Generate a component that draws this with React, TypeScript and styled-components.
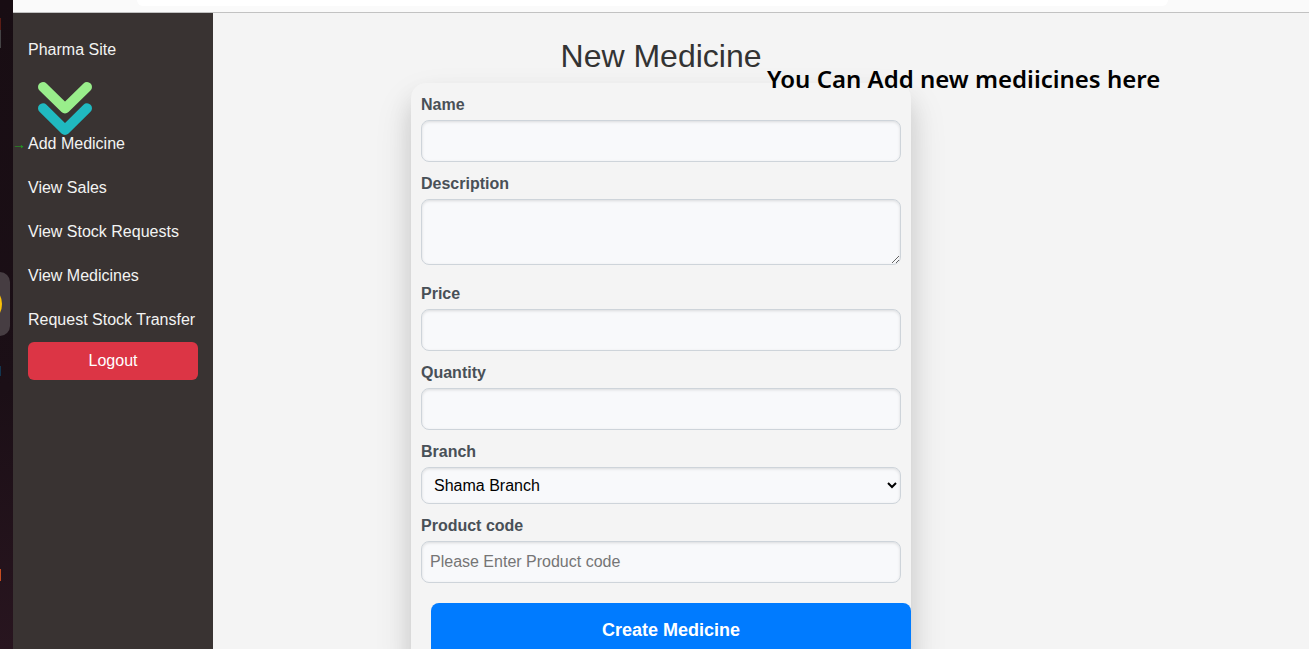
import React from "react";
import styled, { createGlobalStyle } from "styled-components";

const GlobalStyle = createGlobalStyle`
  *, *::before, *::after { box-sizing: border-box; }
  body {
    margin: 0;
    background: #f4f4f4;
    font-family: "Liberation Sans", Arial, sans-serif;
    font-size: 16px;
    line-height: 24px;
  }
`;

const Screen = styled.div`
  display: flex;
  height: 100vh;
  overflow: hidden;
`;

const Dock = styled.aside`
  position: relative;
  flex: 0 0 13px;
  overflow: hidden;
  background: linear-gradient(#180d13, #1b0f16 60%, #28151f);
`;

const DockMark = styled.span<{ $top: number; $width: number; $height: number; $fill: string; $round?: number }>`
  position: absolute;
  left: 0;
  top: ${(p) => p.$top}px;
  width: ${(p) => p.$width}px;
  height: ${(p) => p.$height}px;
  background: ${(p) => p.$fill};
  border-radius: 0 ${(p) => p.$round ?? 0}px ${(p) => p.$round ?? 0}px 0;
`;

const DockApp = styled.svg`
  position: absolute;
  left: 0;
  top: 290px;
`;

const Browser = styled.div`
  display: flex;
  flex: 1;
  flex-direction: column;
  min-width: 0;
`;

const Toolbar = styled.header`
  flex: 0 0 13px;
  padding: 0 141px 0 124px;
  background: #fafafa;
  border-bottom: 1px solid #c2c2c2;
`;

const AddressBar = styled.div`
  height: 6px;
  background: #fff;
  border-radius: 0 0 16px 16px;
`;

const Page = styled.div`
  display: flex;
  flex: 1;
  min-height: 0;
`;

const Sidebar = styled.nav`
  display: flex;
  flex: 0 0 200px;
  flex-direction: column;
  padding: 15px;
  background: #393332;
`;

const NavLink = styled.a`
  position: relative;
  padding: 10px 0;
  color: #f3f3f3;
  text-decoration: none;
  white-space: nowrap;
`;

const Arrow = styled.span`
  position: absolute;
  left: -16px;
  top: 10px;
  color: #1fa51f;
  font-size: 14px;
`;

const Logo = styled.svg`
  flex: none;
  margin: 10px 0 -14px 10px;
`;

const LogoutButton = styled.button`
  height: 38px;
  padding: 0;
  border: 0;
  border-radius: 6px;
  background: #dc3545;
  color: #fff;
  font: inherit;
`;

const Main = styled.main`
  position: relative;
  display: flex;
  flex: 1;
  flex-direction: column;
  align-items: center;
  min-width: 0;
  padding: 24px 200px 0 0;
  overflow: hidden;
`;

const Title = styled.h1`
  margin: 0 0 8px;
  color: #333;
  font-size: 32px;
  font-weight: 400;
  line-height: 38px;
`;

const Note = styled.p`
  position: absolute;
  left: 554px;
  top: 50px;
  margin: 0;
  color: #000;
  font-family: "Noto Sans", sans-serif;
  font-size: 24px;
  font-weight: 600;
  line-height: 32px;
  white-space: nowrap;
`;

const Form = styled.form`
  display: flex;
  flex: none;
  flex-direction: column;
  gap: 10px;
  width: 100%;
  max-width: 500px;
  padding: 10px;
  border-radius: 15px;
  background: #f4f4f4;
  box-shadow: 0 19px 38px rgba(0, 0, 0, 0.12), 0 15px 24px rgba(0, 0, 0, 0.1);
`;

const Field = styled.div`
  display: flex;
  flex-direction: column;
  gap: 3px;
`;

const Label = styled.label`
  color: #495057;
  font-weight: 700;
`;

const control = `
  width: 100%;
  border: 1px solid #ced4da;
  border-radius: 8px;
  background: #f8f9fb;
  box-shadow: inset 0 1px 3px rgba(0, 0, 0, 0.12);
  font-family: inherit;
  font-size: 16px;
`;

const Input = styled.input`
  ${control}
  height: 42px;
  padding: 8px;
  &::placeholder { color: #757575; }
`;

const TextArea = styled.textarea`
  ${control}
  display: block;
  height: 66px;
  margin-bottom: 7px;
  padding: 8px;
  resize: vertical;
`;

const Select = styled.select`
  ${control}
  height: 37px;
  padding: 8px;
  color: #000;
`;

const SubmitButton = styled.button`
  height: 54px;
  margin: 10px -10px 0 10px;
  border: 0;
  border-radius: 8px;
  background: #007bff;
  color: #fff;
  font-family: inherit;
  font-size: 18px;
  font-weight: 700;
`;

const links = ["Add Medicine", "View Sales", "View Stock Requests", "View Medicines", "Request Stock Transfer"];

export default function App() {
  return (
    <>
      <GlobalStyle />
      <Screen>
        <Dock>
          <DockMark $top={18} $width={1} $height={12} $fill="#5c1d16" />
          <DockMark $top={30} $width={1} $height={18} $fill="#454345" />
          <DockMark $top={272} $width={10} $height={64} $fill="#463d42" $round={10} />
          <DockApp width="3" height="28" viewBox="0 0 3 28">
            <ellipse cx="-7" cy="14" rx="9" ry="14" fill="#fbc108" />
          </DockApp>
          <DockMark $top={366} $width={1} $height={10} $fill="#123650" />
          <DockMark $top={569} $width={1} $height={12} $fill="#c64c20" />
        </Dock>
        <Browser>
          <Toolbar>
            <AddressBar />
          </Toolbar>
          <Page>
            <Sidebar>
              <NavLink href="#">Pharma Site</NavLink>
              <Logo width="54" height="54" viewBox="0 0 54 54" fill="none" strokeWidth="10" strokeLinecap="round" strokeLinejoin="round" aria-hidden="true">
                <path d="M5 26.3 27 48 49 26.3" stroke="#20b9c0" />
                <path d="M5 5 27 26.5 49 5" stroke="#99ee8b" />
              </Logo>
              {links.map((text, i) => (
                <NavLink href="#" key={text}>
                  {i === 0 && <Arrow aria-hidden="true">→</Arrow>}
                  {text}
                </NavLink>
              ))}
              <LogoutButton type="button">Logout</LogoutButton>
            </Sidebar>
            <Main>
              <Title>New Medicine</Title>
              <Form>
                <Field>
                  <Label htmlFor="name">Name</Label>
                  <Input id="name" type="text" />
                </Field>
                <Field>
                  <Label htmlFor="description">Description</Label>
                  <TextArea id="description" />
                </Field>
                <Field>
                  <Label htmlFor="price">Price</Label>
                  <Input id="price" type="text" />
                </Field>
                <Field>
                  <Label htmlFor="quantity">Quantity</Label>
                  <Input id="quantity" type="text" />
                </Field>
                <Field>
                  <Label htmlFor="branch">Branch</Label>
                  <Select id="branch">
                    <option>Shama Branch</option>
                  </Select>
                </Field>
                <Field>
                  <Label htmlFor="code">Product code</Label>
                  <Input id="code" type="text" placeholder="Please Enter Product code" />
                </Field>
                <SubmitButton type="submit">Create Medicine</SubmitButton>
              </Form>
              <Note>You Can Add new mediicines here</Note>
            </Main>
          </Page>
        </Browser>
      </Screen>
    </>
  );
}
